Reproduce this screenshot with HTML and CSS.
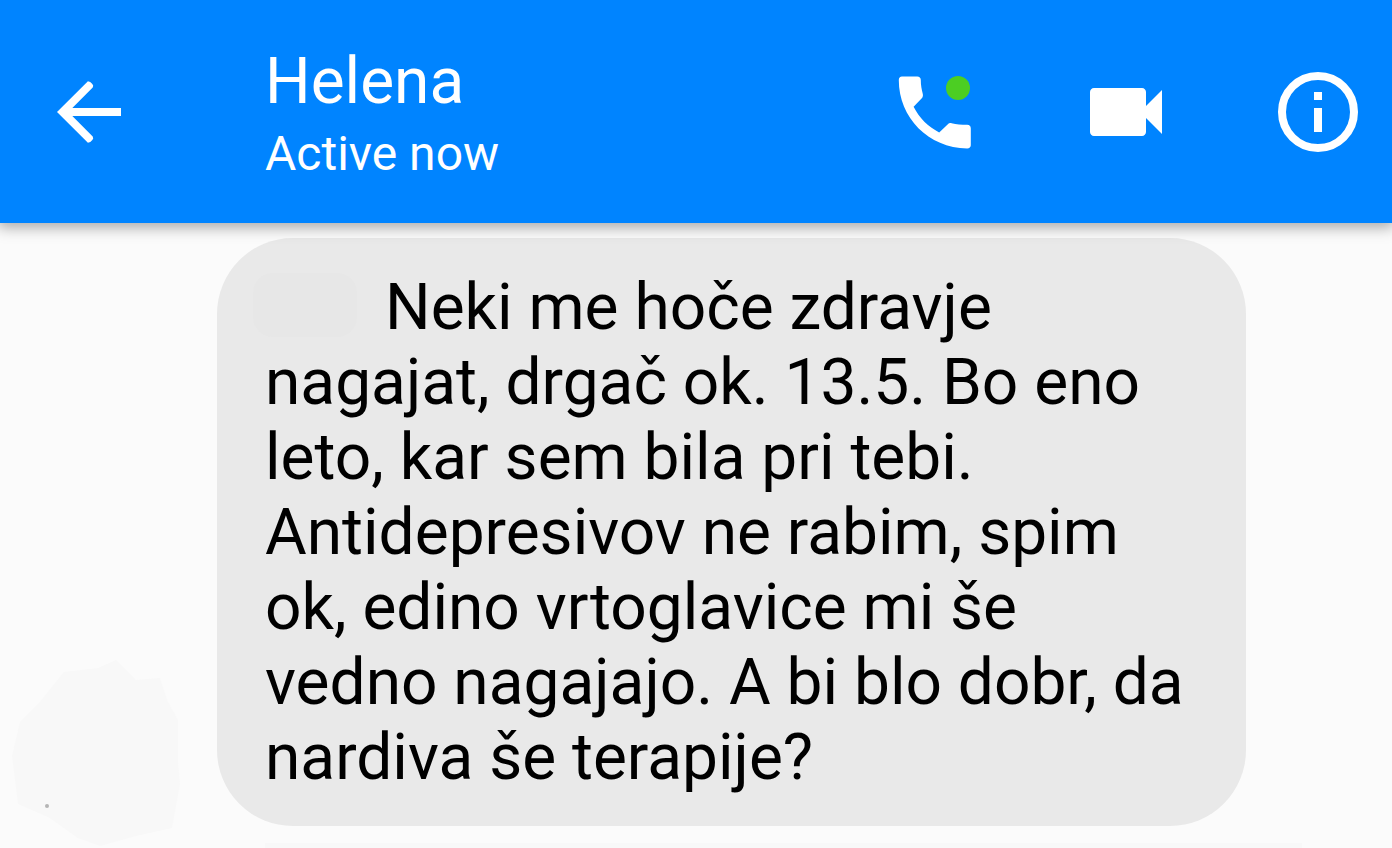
FILE: index.html
```html
<!DOCTYPE html>
<html lang="sl">
<head>
    <meta charset="UTF-8">
    <meta name="viewport" content="width=device-width, initial-scale=1.0">
    <title>Helena</title>
    <link rel="stylesheet" href="styles.css">
</head>
<body>
    <header class="chat-header">
        <button type="button" class="icon-btn" aria-label="Back">
            <svg viewBox="0 0 24 24">
                <path d="M20 11H7.83l5.1-5.1q.3-.5-.1-.9-.5-.7-1.100-.7L4 12l7.730 7.700q.6 0 1.100-.7.4-.4.1-.9L7.83 13H20z"/>
            </svg>
        </button>
        <div class="contact">
            <h1>Helena</h1>
            <p>Active now</p>
        </div>
        <div class="actions">
            <button type="button" class="icon-btn" aria-label="Call">
                <svg viewBox="0 0 24 24">
                    <path d="M6.900 10.700c1.440 2.830 3.600 5 6.400 6.400l2.100-2c.3-.3.6-.4 1-.3 1.200.3 2.400.4 3.900.4.550 0 .9.350.9.9V20.300c0 .5-.35.8-.9.8C10.600 21 3.200 13.400 3.200 4c0-.550.3-.9.8-.9h3.800c.550 0 .9.350.9.9 0 1.250.2 2.350.5 3.470.1.400 0 .8-.250 1.100z"/>
                    <circle class="online" cx="18" cy="6" r="3"/>
                </svg>
            </button>
            <button type="button" class="icon-btn" aria-label="Video call">
                <svg viewBox="0 0 24 24">
                    <path d="M17 10.5V7c0-.55-.45-1-1-1H4c-.55 0-1 .45-1 1v10c0 .55.45 1 1 1h12c.55 0 1-.45 1-1v-3.5l4 4v-11z"/>
                </svg>
            </button>
            <button type="button" class="icon-btn" aria-label="Info">
                <svg viewBox="0 0 24 24">
                    <circle class="ring" cx="12" cy="12" r="9"/>
                    <path d="M11 7h2v2h-2zM11 11h2v6h-2z"/>
                </svg>
            </button>
        </div>
    </header>

    <main class="chat">
        <div class="message">
            <svg class="avatar" viewBox="0 0 168 186">
                <path d="M28 42L52 12L86 8L104 0L124 20L148 18L156 42L166 60V102L168 124L160 168L124 176L88 186L66 178L38 158L6 144L0 96L8 62z"/>
                <circle class="speck" cx="35" cy="146" r="2"/>
            </svg>
            <p class="bubble"><span class="name-blank"></span>Neki me hoče zdravje nagajat, drgač ok. 13.5. Bo eno leto, kar sem bila pri tebi. Antidepresivov ne rabim, spim ok, edino vrtoglavice mi še vedno nagajajo. A bi blo dobr, da nardiva še terapije?</p>
        </div>
        <div class="next-message"></div>
    </main>
</body>
</html>
```

FILE: styles.css
```css
* {
    box-sizing: border-box;
}

body {
    font-family: Roboto, "Liberation Sans", sans-serif;
    background-color: #fbfbfb;
    display: flex;
    flex-direction: column;
    min-height: 100vh;
    margin: 0;
}

.chat-header {
    background-color: #0084ff;
    color: #fff;
    display: flex;
    align-items: center;
    flex-shrink: 0;
    padding: 40px 26px 39px 41px;
    box-shadow: 0 2px 14px 2px rgba(0, 0, 0, 0.35);
    z-index: 1;
}

.icon-btn {
    width: 96px;
    height: 96px;
    padding: 0;
    border: none;
    background: none;
    cursor: pointer;
}

.icon-btn svg {
    display: block;
    width: 100%;
    fill: #fff;
}

.icon-btn .online {
    fill: #4cce23;
}

.icon-btn .ring {
    fill: none;
    stroke: #fff;
    stroke-width: 2;
}

.contact {
    flex: 1;
    margin-left: 128px;
}

.contact h1 {
    font-size: 64px;
    font-weight: 400;
    line-height: 84px;
    margin: 0;
}

.contact p {
    font-size: 48px;
    line-height: 60px;
    margin: 0;
}

.actions {
    display: flex;
    gap: 96px;
}

.chat {
    flex: 1;
    display: flex;
    flex-direction: column;
    padding: 15px 146px 0 12px;
}

.message {
    display: flex;
    align-items: flex-end;
    gap: 37px;
}

.avatar {
    width: 168px;
    flex-shrink: 0;
    margin-bottom: -20px;
    fill: #f8f8f8;
}

.avatar .speck {
    fill: #b5b5b5;
}

.bubble {
    flex: 1;
    margin: 0;
    padding: 32px 48px 31px;
    border-radius: 76px;
    background-color: #e9e9e9;
    color: #000;
    font-size: 64px;
    line-height: 75px;
}

.name-blank {
    display: inline-block;
    width: 104px;
    height: 64px;
    margin: 0 28px 0 -12px;
    border-radius: 20px;
    background-color: #e7e7e7;
    vertical-align: -8px;
}

/* top edge of the following bubble */
.next-message {
    flex: 1;
    margin: 17px -56px 0 253px;
    background-color: #f8f8f8;
}
```
